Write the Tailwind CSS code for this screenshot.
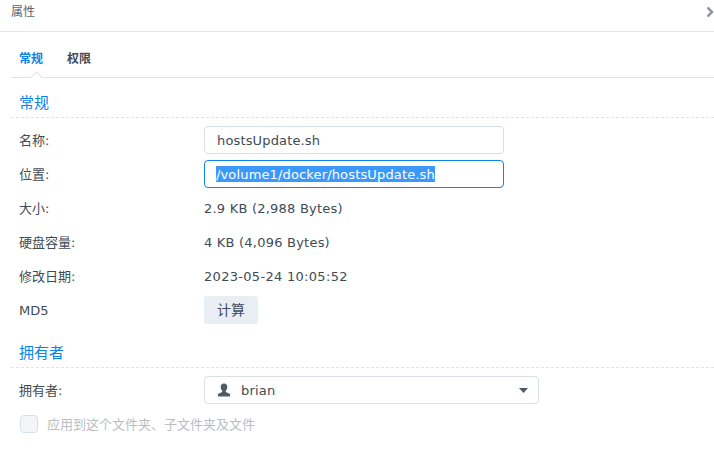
<!DOCTYPE html>
<html lang="zh">

<head>
  <meta charset="UTF-8" />
  <title>属性</title>
  <script src="https://cdn.jsdelivr.net/npm/@tailwindcss/browser@4"></script>
</head>

<body class="bg-white text-[#414b55] text-[13px] font-['DejaVu_Sans','Noto_Sans_CJK_SC',sans-serif] h-[472px] w-[714px] overflow-hidden">

  <!-- title bar -->
  <div class="h-[32px] border-b border-[#e3e8ef] flex items-start justify-between pl-[11px] pr-0">
    <span class="text-[12px] leading-[24px] text-[#5a6570]">属性</span>
    <svg class="mt-[7px]" width="7" height="10" viewBox="0 0 7 10"><path d="M0.500 0.500l4.500 4.500L0.500 9.500" fill="none" stroke="#8e969e" stroke-width="2.500" /></svg>
  </div>

  <div class="pl-[11px]">
    <!-- tabs -->
    <div class="relative h-[46px] border-b border-[#dde3ea] flex items-start gap-[24px] pl-[8px] pt-[18px] text-[12px] font-bold leading-[18px]">
      <span class="text-[#0b84e8]">常规</span>
      <span class="text-[#414b55]">权限</span>
      <span class="absolute left-[19px] bottom-[-1px] w-[13px] h-[7px] overflow-hidden">
        <span class="block w-[9px] h-[9px] mt-[2px] ml-[2px] rotate-45 bg-white border border-[#dde3ea]"></span>
      </span>
    </div>

    <!-- general -->
    <div class="h-[40px] border-b border-dashed border-[#dde3ea] pl-[8px] pt-[15px] text-[15px] leading-[20px] text-[#0b84e8]">常规</div>

    <div class="pl-[8px] pt-[8px]">
      <div class="flex items-center h-[28px] mb-[6px]">
        <span class="w-[185px] pt-[2px]">名称:</span>
        <div class="w-[300px] h-[28px] border border-[#d7dfe8] rounded-[4px] pl-[12px] leading-[28px] tracking-[0.15px]">hostsUpdate.sh</div>
      </div>
      <div class="flex items-center h-[28px] mb-[6px]">
        <span class="w-[185px] pt-[2px]">位置:</span>
        <div class="w-[300px] h-[28px] border border-[#0b84e8] rounded-[4px] pl-[11px] pt-[5px] tracking-[0.15px]"><span class="block w-fit h-[16px] leading-[17px] bg-[#3b99fc] text-white">/volume1/docker/hostsUpdate.sh</span></div>
      </div>
      <div class="flex items-center h-[28px] mb-[6px]">
        <span class="w-[185px] pt-[2px]">大小:</span>
        <span class="pt-[2px] tracking-[0.22px]">2.9 KB (2,988 Bytes)</span>
      </div>
      <div class="flex items-center h-[28px] mb-[6px]">
        <span class="w-[185px] pt-[2px]">硬盘容量:</span>
        <span class="pt-[2px] tracking-[0.22px]">4 KB (4,096 Bytes)</span>
      </div>
      <div class="flex items-center h-[28px] mb-[6px]">
        <span class="w-[185px] pt-[2px]">修改日期:</span>
        <span class="pt-[2px] tracking-[0.3px]">2023-05-24 10:05:52</span>
      </div>
      <div class="flex items-center h-[28px]">
        <span class="w-[185px] pt-[2px]">MD5</span>
        <button class="w-[54px] h-[28px] bg-[#e9eef5] rounded-[3px] text-[14px]">计算</button>
      </div>
    </div>

    <!-- owner -->
    <div class="h-[44px] border-b border-dashed border-[#dde3ea] pl-[8px] pt-[19px] text-[15px] leading-[20px] text-[#0b84e8]">拥有者</div>

    <div class="pl-[8px] pt-[8px]">
      <div class="flex items-center h-[28px]">
        <span class="w-[185px] pt-[2px]">拥有者:</span>
        <div class="w-[335px] h-[28px] border border-[#d7dfe8] rounded-[4px] flex items-center pl-[12px] pr-[10px]">
          <svg width="14" height="14" viewBox="0 0 14 14"><path d="M7 0.500c-2.200 0-3.300 1.500-3.300 3.500 0 1.500.6 2.900 1.500 3.700v1.300L1 11v2.500h12V11L8.800 9V7.700c.9-.8 1.500-2.200 1.500-3.700 0-2-1.100-3.500-3.300-3.500z" fill="#4f5b67" /></svg>
          <span class="ml-[10px] pt-[2px] tracking-[0.2px]">brian</span>
          <svg class="ml-auto" width="9" height="5" viewBox="0 0 9 5"><path d="M0 0h9L4.500 5z" fill="#4f5b67" /></svg>
        </div>
      </div>
      <label class="flex items-center mt-[11px] text-[#b9bec4]">
        <span class="w-[18px] h-[18px] mt-[-1px] ml-[1px] bg-[#f3f5f9] border border-[#d7dfe8] rounded-[4px]"></span>
        <span class="ml-[9px]">应用到这个文件夹、子文件夹及文件</span>
      </label>
    </div>
  </div>

</body>

</html>
